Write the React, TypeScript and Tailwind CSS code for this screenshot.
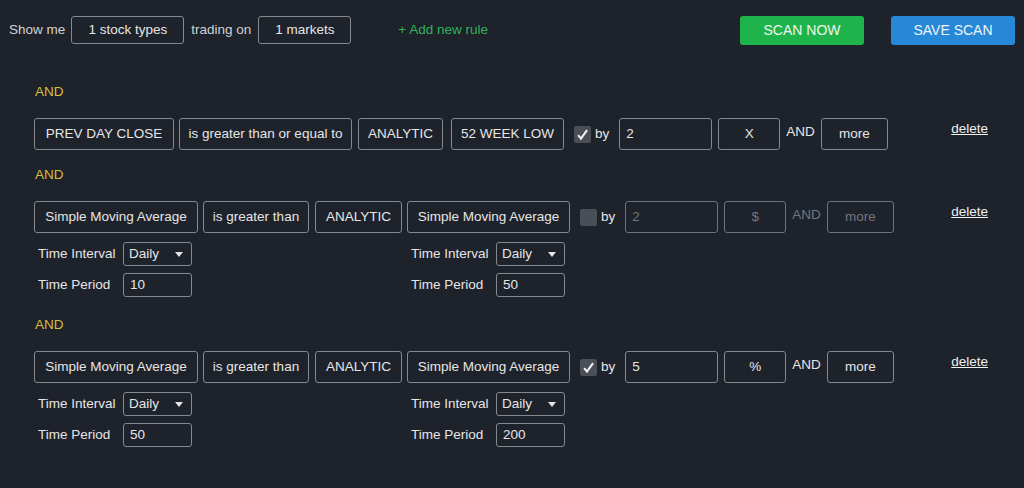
import React from "react";

type Opt = { left: [string, string]; right: [string, string] };

type Rule = {
  boxes: { label: string; w: string; ml: string }[];
  checked: boolean;
  value: string;
  unit: string;
  disabled?: boolean;
  opts?: Opt;
};

const rules: Rule[] = [
  {
    boxes: [
      { label: "PREV DAY CLOSE", w: "w-[140px]", ml: "" },
      { label: "is greater than or equal to", w: "w-[173px]", ml: "ml-[5px]" },
      { label: "ANALYTIC", w: "w-[85px]", ml: "ml-[6px]" },
      { label: "52 WEEK LOW", w: "w-[113px]", ml: "ml-[8px]" },
    ],
    checked: true,
    value: "2",
    unit: "X",
  },
  {
    boxes: [
      { label: "Simple Moving Average", w: "w-[164px]", ml: "" },
      { label: "is greater than", w: "w-[106px]", ml: "ml-[5px]" },
      { label: "ANALYTIC", w: "w-[87px]", ml: "ml-[6px]" },
      { label: "Simple Moving Average", w: "w-[163px]", ml: "ml-[5px]" },
    ],
    checked: false,
    value: "2",
    unit: "$",
    disabled: true,
    opts: { left: ["Daily", "10"], right: ["Daily", "50"] },
  },
  {
    boxes: [
      { label: "Simple Moving Average", w: "w-[164px]", ml: "" },
      { label: "is greater than", w: "w-[106px]", ml: "ml-[5px]" },
      { label: "ANALYTIC", w: "w-[87px]", ml: "ml-[6px]" },
      { label: "Simple Moving Average", w: "w-[163px]", ml: "ml-[5px]" },
    ],
    checked: true,
    value: "5",
    unit: "%",
    opts: { left: ["Daily", "50"], right: ["Daily", "200"] },
  },
];

// vertical spacing above each rule's AND label
const tops = ["mt-[40px]", "mt-[17px]", "mt-[20px]"];

function Check({ on }: { on: boolean }) {
  return (
    <span className="w-[17px] h-[17px] rounded-[2px] bg-[#4a4e56] flex items-center justify-center">
      {on && (
        <svg width="13" height="13" viewBox="0 0 12 12">
          <path d="M2 6.5 L4.6 9.8 L10.2 2" stroke="#f4f4f4" strokeWidth="1.9" fill="none" />
        </svg>
      )}
    </span>
  );
}

function OptPair({ interval, period, w }: { interval: string; period: string; w?: string }) {
  return (
    <div className={`flex flex-col gap-[7px] ${w ?? ""}`}>
      <div className="flex items-center h-[24px]">
        <span className="w-[85px]">Time Interval</span>
        <div className="w-[69px] h-[24px] border border-[#85888d] rounded-[3px] flex items-center justify-between pl-[5px] pr-[8px]">
          <span>{interval}</span>
          <svg width="8" height="5" viewBox="0 0 8 5">
            <path d="M0 0 H8 L4 5 Z" fill="#e4e4e4" />
          </svg>
        </div>
      </div>
      <div className="flex items-center h-[24px]">
        <span className="w-[85px]">Time Period</span>
        <div className="w-[69px] h-[24px] border border-[#85888d] rounded-[3px] flex items-center pl-[6px]">
          {period}
        </div>
      </div>
    </div>
  );
}

function RuleBlock({ r, top }: { r: Rule; top: string }) {
  const dim = r.disabled ? "text-[#73767c]" : "text-[#e6e6e6]";
  const dimBorder = r.disabled ? "border-[#6f7277]" : "border-[#85888d]";
  return (
    <div className={top}>
      <div className="h-[16px] leading-[16px] pl-[35px] text-[#d9bd3a]">AND</div>
      <div className="flex mt-[18px] pl-[34px] pr-[36px]">
        <div className="flex items-center h-[32px]">
          {r.boxes.map((b, i) => (
            <div
              key={i}
              className={`${b.w} h-[32px] ${b.ml} border border-[#85888d] rounded-[3px] flex items-center justify-center whitespace-nowrap`}
            >
              {b.label}
            </div>
          ))}
          <span className="ml-[10px]">
            <Check on={r.checked} />
          </span>
          <span className="ml-[4px]">by</span>
          <div
            className={`ml-[10px] w-[93px] h-[32px] border ${dimBorder} rounded-[3px] flex items-center pl-[6px] ${dim}`}
          >
            {r.value}
          </div>
          <div
            className={`ml-[6px] w-[62px] h-[32px] border ${dimBorder} rounded-[3px] flex items-center justify-center ${dim}`}
          >
            {r.unit}
          </div>
          <span className={`ml-[6px] ${dim} -mt-[4px]`}>AND</span>
          <div
            className={`ml-[6px] w-[67px] h-[32px] border ${dimBorder} rounded-[3px] flex items-center justify-center ${dim}`}
          >
            more
          </div>
        </div>
        <span className="ml-auto underline mt-[1px] text-[#f0f0f0]">delete</span>
      </div>
      {r.opts && (
        <div className="flex mt-[9px] pl-[38px]">
          <OptPair interval={r.opts.left[0]} period={r.opts.left[1]} w="w-[373px]" />
          <OptPair interval={r.opts.right[0]} period={r.opts.right[1]} />
        </div>
      )}
    </div>
  );
}

export default function App() {
  return (
    <div className="w-[1024px] h-[488px] overflow-hidden bg-[#1e222b] text-[#e6e6e6] text-[13.5px] font-['Liberation_Sans',Arial,sans-serif]">
      <div className="flex items-center h-[28px] mt-[16px] pl-[9px] pr-[9px]">
        <span className="text-[#d2d2d2]">Show me</span>
        <div className="ml-[6px] w-[113px] h-[28px] border border-[#85888d] rounded-[3px] flex items-center justify-center">
          1 stock types
        </div>
        <span className="ml-[7px] text-[#d2d2d2]">trading on</span>
        <div className="ml-[7px] w-[93px] h-[28px] border border-[#85888d] rounded-[3px] flex items-center justify-center">
          1 markets
        </div>
        <span className="ml-[47px] text-[#2fb35a]">+ Add new rule</span>
        <button className="ml-auto w-[124px] h-[29px] rounded-[3px] bg-[#1fb34b] text-[#eef7ee] text-[14px]">
          SCAN NOW
        </button>
        <button className="ml-[27px] w-[124px] h-[29px] rounded-[3px] bg-[#2688d6] text-[#eef4fa] text-[14px]">
          SAVE SCAN
        </button>
      </div>
      {rules.map((r, i) => (
        <RuleBlock key={i} r={r} top={tops[i]} />
      ))}
    </div>
  );
}
